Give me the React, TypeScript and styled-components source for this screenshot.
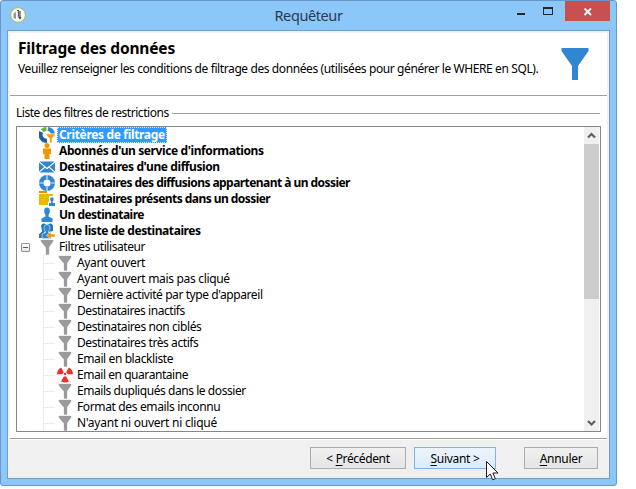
import React from 'react';
import styled, { createGlobalStyle, css } from 'styled-components';

const Global = createGlobalStyle`
  * { box-sizing: border-box; }
  body { margin: 0; background: #fff; }
`;

const Page = styled.div`
  width: 636px;
  height: 489px;
  overflow: hidden;
  position: relative;
  font: 12px/16px "Noto Sans", "Open Sans", sans-serif;
  color: #000;
  cursor: default;
`;

const Label = styled.span<{ $spacing?: number }>`
  white-space: pre;
  letter-spacing: ${p => p.$spacing ?? -0.4}px;
`;

const Window = styled.div`
  width: 617px;
  height: 486px;
  padding: 0 6px 6px;
  display: flex;
  flex-direction: column;
  border: 1px solid #6a96c5;
  border-radius: 3px;
  background: #8cc7fa;
`;

const TitleBar = styled.header`
  height: 29px;
  display: grid;
  grid-template-columns: 135px 1fr 135px;
`;

const AppIcon = styled.svg`
  width: 16px;
  height: 16px;
  margin: 6px 0 0 3px;
`;

const Title = styled.h1`
  margin: 0;
  padding-top: 4px;
  text-align: center;
  font-size: 14.5px;
  line-height: 21px;
  font-weight: 400;
  color: #293a4b;
`;

const Controls = styled.div`
  display: flex;
  justify-content: flex-end;
  height: 20px;
`;

const Control = styled.div<{ $width: number; $close?: boolean }>`
  width: ${p => p.$width}px;
  height: 20px;
  background: ${p => (p.$close ? '#c75050' : 'transparent')};
  svg { display: block; }
`;

const Client = styled.main`
  flex: 1;
  min-height: 0;
  display: flex;
  flex-direction: column;
  border: 1px solid #6d9dcc;
  background: #f0f0f0;
  padding: 2px 2px 0;
`;

const Header = styled.section`
  height: 62px;
  display: flex;
  justify-content: space-between;
  background: #fff;
  padding-left: 8px;
`;

const HeaderText = styled.div`
  padding-top: 5px;
`;

const Heading = styled.h2`
  margin: 0;
  font-size: 15.5px;
  line-height: 21px;
  font-weight: 700;
`;

const Hint = styled.p`
  margin: 2px 0 0;
`;

const HeaderIcon = styled.svg`
  flex: none;
  width: 28px;
  height: 32px;
  margin: 15px 18px 0 0;
`;

const Body = styled.section`
  height: 344px;
  padding: 9px 6px 0;
  background: #fff;
  border: solid #a0a0a0;
  border-width: 1px 0;
`;

const Legend = styled.div`
  display: flex;
  height: 16px;
  margin-right: 1px;
  gap: 3px;
  &::after {
    content: "";
    flex: 1;
    height: 1px;
    margin-top: 8px;
    background: #a0a0a0;
  }
`;

const ListBox = styled.div`
  display: flex;
  height: 306px;
  margin-top: 5px;
  width: 585px;
  border: 1px solid #828790;
  background: #fff;
`;

const Tree = styled.div`
  flex: 1;
  overflow: hidden;
`;

const rowBase = css`
  display: flex;
  height: 16px;
  align-items: center;
`;

const RootRow = styled.div<{ $bold?: boolean }>`
  ${rowBase}
  padding-left: ${p => (p.$bold ? 22 : 4)}px;
  font-weight: ${p => (p.$bold ? 700 : 400)};
`;

const ChildRow = styled.div`
  ${rowBase}
  margin-left: 26px;
  border-left: 1px solid #ebebeb;
  &::before {
    content: "";
    width: 11px;
    height: 1px;
    margin-right: 2px;
    background: #ebebeb;
  }
`;

const Icon = styled.svg`
  width: 16px;
  height: 16px;
  flex: none;
`;

const Cell = styled.span<{ $selected?: boolean }>`
  height: 16px;
  margin-left: 2px;
  padding: 0 2px;
  line-height: 16px;
  ${p => p.$selected && css`
    color: #fff;
    background: #3399ff;
    outline: 1px dotted #d8ecff;
    outline-offset: -1px;
  `}
`;

const Toggle = styled.span`
  width: 9px;
  height: 9px;
  margin-right: 9px;
  border: 1px solid #919191;
  border-radius: 1px;
  background: linear-gradient(#fff, #e6e6e6);
  display: flex;
  align-items: center;
  justify-content: center;
  &::before {
    content: "";
    width: 5px;
    height: 1px;
    background: #3c5a9e;
  }
`;

const ScrollBar = styled.div`
  width: 15px;
  margin-right: 1px;
  display: flex;
  flex-direction: column;
  background: #f0f0f0;
`;

const Arrow = styled.svg`
  width: 15px;
  height: 17px;
`;

const Thumb = styled.div`
  height: 155px;
  margin-bottom: auto;
  background: #cdcdcd;
`;

const Footer = styled.footer`
  display: flex;
  flex: 1;
  justify-content: flex-end;
  padding: 7px 9px 0 0;
  border-top: 1px solid #fff;
`;

const Button = styled.button<{ $width: number; $hot?: boolean; $gap?: number }>`
  width: ${p => p.$width}px;
  height: 22px;
  margin: 0 0 0 ${p => p.$gap ?? 0}px;
  padding: 0;
  font: inherit;
  line-height: 19px;
  color: #000;
  border: 1px solid ${p => (p.$hot ? '#7eb4ea' : '#acacac')};
  background: ${p => (p.$hot ? 'linear-gradient(#ecf4fc, #dcecfc)' : 'linear-gradient(#f0f0f0, #e5e5e5)')};
  u { text-decoration: underline; text-underline-offset: 2px; text-decoration-skip-ink: none; }
`;

const Pointer = styled.svg`
  position: absolute;
  left: 486px;
  top: 461px;
  width: 13px;
  height: 20px;
`;

type IconName = 'criteria' | 'person' | 'mail' | 'ring' | 'folder' | 'user' | 'group' | 'funnel' | 'hazard';

const glyphs: Record<IconName, React.ReactNode> = {
  criteria: (
    <g fill="none" strokeWidth="4">
      <path d="M3.300 3.700A6 6 0 0 1 7.500 2" stroke="#6cb344" />
      <path d="M8.800 2A6 6 0 0 1 14 7" stroke="#3186d1" />
      <path d="M2.300 5A6 6 0 0 0 8 13.800" stroke="#1f6098" />
      <path d="M7.500 6.800H16v1.400L13 11.500V16h-2.500v-4.500l-3-3.300z" fill="#f39c12" stroke="#fff" strokeWidth=".6" />
    </g>
  ),
  person: <path d="M5.500 2.500a2.500 2.500 0 1 1 5 0 2.500 2.500 0 0 1-5 0M4 5.500h8V11h-1.500v5h-5v-5H4z" fill="#f29400" />,
  mail: (
    <g fill="#3186d1">
      <path d="M.5 2.500h15L8 8.800zM0 3.500 5.300 8 0 12.500zM16 3.500v9L10.700 8zM6.100 8.800 8 10.300l1.900-1.500 5.600 4.700H.5z" />
    </g>
  ),
  ring: (
    <g fill="none">
      <circle cx="8" cy="8" r="5.800" stroke="#3186d1" strokeWidth="4.400" />
      <path d="M8 0v4M8 12v4M0 8h4M12 8h4" stroke="#d5e9fa" strokeWidth="1.200" />
    </g>
  ),
  folder: (
    <>
      <path d="M0 0h8v2H0z" fill="#ee8a00" />
      <path d="M0 3h14v11H0z" fill="#edb800" />
      <path d="M10 5h6v11H9v-5h1z" fill="#fff" />
      <path d="M11.300 6.500h3.200v3.500h-.8v2H16v3h-6v-3h2v-2h-.7z" fill="#3186d1" />
    </>
  ),
  user: <path d="M5.200 3.800a2.800 3.200 0 0 1 5.600 0C11 6 10 7 9.500 8v1.500l4 2V15h-11v-3.500l4-2V8C6 7 5 6 5.200 3.800z" fill="#3186d1" />,
  group: (
    <>
      <path d="M2 2.500Q3.500-.5 6 .8L7.500 2v6L5 9v6H0v-4l3.200-2.500z" fill="#2a74b8" />
      <path d="M14 2.500Q12.500-.5 10 .8L8.500 2v6L11 9l3-1z" fill="#2a74b8" />
      <path d="M5 4.500a3 3 0 0 1 6 0Q11 7 9.500 8.500v1L12 11v4.500H3V11l3.500-1.500v-1Q5 7 5 4.500z" fill="#3186d1" stroke="#c6e0f6" strokeWidth=".7" />
      <path d="M7.500 12.500 12 8.500V11h4v3h-4v2.300z" fill="#f39200" stroke="#fff" strokeWidth=".5" />
    </>
  ),
  funnel: <path d="M2 1h12v1.500L10 8V15.500H7V8.500L2 2.500z" fill="#9a9a9a" stroke="#9a9a9a" strokeWidth=".3" />,
  hazard: (
    <g fill="#e5352b">
      <path d="M3.500.8Q5 .8 6.800 5.500L5 7.300H0Q.2 3 3.500.8zM12.500.8Q11 .8 9.200 5.500L11 7.300h5Q15.800 3 12.500.8zM6.800 9.500h2.400l2.800 5q-4 1.800-8 0z" />
      <circle cx="8" cy="7" r="1.200" />
    </g>
  ),
};

const TreeIcon = ({ name }: { name: IconName }) => <Icon viewBox="0 0 16 16">{glyphs[name]}</Icon>;

const roots: { icon: IconName; text: string; spacing: number }[] = [
  { icon: 'criteria', text: 'Critères de filtrage', spacing: -0.33 },
  { icon: 'person', text: "Abonnés d'un service d'informations", spacing: -0.4 },
  { icon: 'mail', text: "Destinataires d'une diffusion", spacing: -0.41 },
  { icon: 'ring', text: 'Destinataires des diffusions appartenant à un dossier', spacing: -0.55 },
  { icon: 'folder', text: 'Destinataires présents dans un dossier', spacing: -0.55 },
  { icon: 'user', text: 'Un destinataire', spacing: -0.53 },
  { icon: 'group', text: 'Une liste de destinataires', spacing: -0.42 },
];

const filters: { text: string; spacing: number; icon?: IconName }[] = [
  { text: 'Ayant ouvert', spacing: -0.35 },
  { text: 'Ayant ouvert mais pas cliqué', spacing: -0.32 },
  { text: "Dernière activité par type d'appareil", spacing: -0.42 },
  { text: 'Destinataires inactifs', spacing: -0.45 },
  { text: 'Destinataires non ciblés', spacing: -0.42 },
  { text: 'Destinataires très actifs', spacing: -0.42 },
  { text: 'Email en blackliste', spacing: -0.4 },
  { text: 'Email en quarantaine', spacing: -0.45, icon: 'hazard' },
  { text: 'Emails dupliqués dans le dossier', spacing: -0.44 },
  { text: 'Format des emails inconnu', spacing: -0.36 },
  { text: "N'ayant ni ouvert ni cliqué", spacing: -0.24 },
];

export default function App() {
  return (
    <Page>
      <Global />
      <Window>
        <TitleBar>
          <AppIcon viewBox="0 0 16 16">
            <circle cx="8" cy="8" r="7.400" fill="#f7f7f7" stroke="#9cc04c" />
            <path d="M3.500 6.500 6 5v7l-2.500-1z" fill="#999" />
            <path d="M7 3.500h1.500V9M10 4v6.500" fill="none" stroke="#555" strokeWidth="1.200" />
            <path d="m7.500 9 4 1.500L10 12.500z" fill="#333" />
          </AppIcon>
          <Title><Label>Requêteur</Label></Title>
          <Controls>
            <Control $width={28}>
              <svg width="28" height="20"><path d="M6 12h8v2H6z" fill="#1d2a35" /></svg>
            </Control>
            <Control $width={26}>
              <svg width="26" height="20"><path d="M4 6h10v8H4zM5 8v5h8V8z" fillRule="evenodd" fill="#1d2a35" /></svg>
            </Control>
            <Control $width={45} $close>
              <svg width="45" height="20"><path d="m19.500 7.500 6.500 6.500m0-6.500L19.500 14" stroke="#fff" strokeWidth="1.800" /></svg>
            </Control>
          </Controls>
        </TitleBar>
        <Client>
          <Header>
            <HeaderText>
              <Heading><Label $spacing={-0.16}>Filtrage des données</Label></Heading>
              <Hint><Label>Veuillez renseigner les conditions de filtrage des données (utilisées pour générer le WHERE en SQL).</Label></Hint>
            </HeaderText>
            <HeaderIcon viewBox="0 0 28 32"><path d="M.5 0h27v3L17 18v14h-6V18L.5 3z" fill="#3186d1" /></HeaderIcon>
          </Header>
          <Body>
            <Legend><Label $spacing={-0.46}>Liste des filtres de restrictions</Label></Legend>
            <ListBox>
              <Tree>
                {roots.map((r, i) => (
                  <RootRow key={r.text} $bold>
                    <TreeIcon name={r.icon} />
                    <Cell $selected={i === 0}><Label $spacing={r.spacing}>{r.text}</Label></Cell>
                  </RootRow>
                ))}
                <RootRow>
                  <Toggle />
                  <TreeIcon name="funnel" />
                  <Cell><Label $spacing={-0.42}>Filtres utilisateur</Label></Cell>
                </RootRow>
                {filters.map(f => (
                  <ChildRow key={f.text}>
                    <TreeIcon name={f.icon ?? 'funnel'} />
                    <Cell><Label $spacing={f.spacing}>{f.text}</Label></Cell>
                  </ChildRow>
                ))}
              </Tree>
              <ScrollBar>
                <Arrow viewBox="0 0 15 17"><path d="m4 10.500 3.500-3.500 3.500 3.500" fill="none" stroke="#606060" strokeWidth="2.200" /></Arrow>
                <Thumb />
                <Arrow viewBox="0 0 15 17"><path d="m4 7 3.500 3.500L11 7" fill="none" stroke="#606060" strokeWidth="2.200" /></Arrow>
              </ScrollBar>
            </ListBox>
          </Body>
          <Footer>
            <Button $width={96}><Label $spacing={-0.35}>&lt; <u>P</u>récédent</Label></Button>
            <Button $width={82} $gap={8} $hot><Label $spacing={-0.3}><u>S</u>uivant &gt;</Label></Button>
            <Button $width={74} $gap={28}><Label $spacing={-0.3}><u>A</u>nnuler</Label></Button>
          </Footer>
        </Client>
      </Window>
      <Pointer viewBox="0 0 13 20">
        <path d="M.5.500v16L4.300 13l2.400 5.800 2.600-1.100L6.900 12H12z" fill="#fff" stroke="#1a1a2a" />
      </Pointer>
    </Page>
  );
}
